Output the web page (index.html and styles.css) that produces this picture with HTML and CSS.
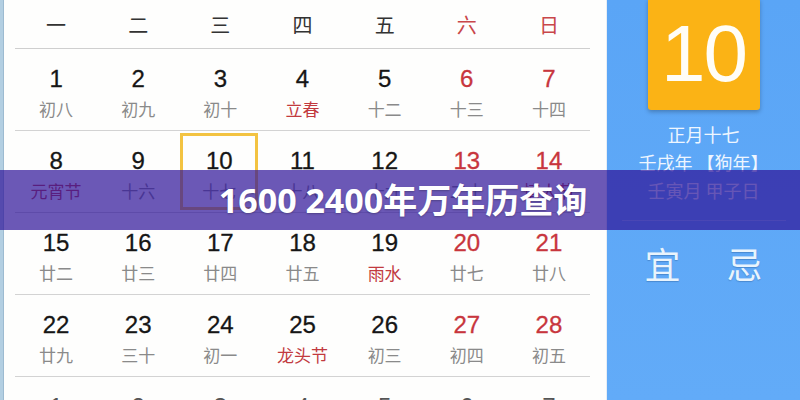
FILE: index.html
```html
<!DOCTYPE html>
<html lang="zh">
<head>
<meta charset="utf-8">
<title>1600 2400年万年历查询</title>
<link rel="stylesheet" href="styles.css">
</head>
<body>
<div class="page">
  <div class="edge"></div>
  <div class="cal">
    <div class="weekdays">
      <span>一</span><span>二</span><span>三</span><span>四</span><span>五</span><span class="we">六</span><span class="we">日</span>
    </div>
    <div class="row">
      <div class="cell"><b>1</b><i>初八</i></div>
      <div class="cell"><b>2</b><i>初九</i></div>
      <div class="cell"><b>3</b><i>初十</i></div>
      <div class="cell"><b>4</b><i class="fest">立春</i></div>
      <div class="cell"><b>5</b><i>十二</i></div>
      <div class="cell we"><b>6</b><i>十三</i></div>
      <div class="cell we"><b>7</b><i>十四</i></div>
    </div>
    <div class="row">
      <div class="cell"><b>8</b><i class="fest">元宵节</i></div>
      <div class="cell"><b>9</b><i>十六</i></div>
      <div class="cell today"><b>10</b><i>十七</i></div>
      <div class="cell"><b>11</b><i>十八</i></div>
      <div class="cell"><b>12</b><i>十九</i></div>
      <div class="cell we"><b>13</b><i>二十</i></div>
      <div class="cell we"><b>14</b><i class="fest">情人节</i></div>
    </div>
    <div class="row">
      <div class="cell"><b>15</b><i>廿二</i></div>
      <div class="cell"><b>16</b><i>廿三</i></div>
      <div class="cell"><b>17</b><i>廿四</i></div>
      <div class="cell"><b>18</b><i>廿五</i></div>
      <div class="cell"><b>19</b><i class="fest">雨水</i></div>
      <div class="cell we"><b>20</b><i>廿七</i></div>
      <div class="cell we"><b>21</b><i>廿八</i></div>
    </div>
    <div class="row">
      <div class="cell"><b>22</b><i>廿九</i></div>
      <div class="cell"><b>23</b><i>三十</i></div>
      <div class="cell"><b>24</b><i>初一</i></div>
      <div class="cell"><b>25</b><i class="fest">龙头节</i></div>
      <div class="cell"><b>26</b><i>初三</i></div>
      <div class="cell we"><b>27</b><i>初四</i></div>
      <div class="cell we"><b>28</b><i>初五</i></div>
    </div>
    <div class="row next">
      <div class="cell"><b>1</b><i>初六</i></div>
      <div class="cell"><b>2</b><i>初七</i></div>
      <div class="cell"><b>3</b><i>初八</i></div>
      <div class="cell"><b>4</b><i>初九</i></div>
      <div class="cell"><b>5</b><i>初十</i></div>
      <div class="cell"><b>6</b><i>十一</i></div>
      <div class="cell"><b>7</b><i>十二</i></div>
    </div>
  </div>
  <div class="panel">
    <div class="daybox">10</div>
    <div class="lunar">
      <p>正月十七</p>
      <p>壬戌年 【狗年】</p>
      <p>壬寅月 甲子日</p>
    </div>
    <div class="yiji"><span>宜</span><span>忌</span></div>
  </div>
  <div class="banner"><h1>1600 2400年万年历查询</h1></div>
</div>
</body>
</html>
```
FILE: styles.css
```css
* { box-sizing: border-box; }
html, body { margin: 0; padding: 0; }
body {
  width: 800px;
  height: 400px;
  overflow: hidden;
  background: #fdfdfc;
  font-family: "Liberation Sans", "Noto Sans CJK SC", sans-serif;
}
.page {
  position: relative;
  display: flex;
  width: 800px;
  height: 400px;
  overflow: hidden;
}
.edge {
  width: 4px;
  flex: none;
  background: #b3cfe2;
  border-right: 1px solid #9dbbd1;
}
.cal {
  width: 602px;
  flex: none;
  padding: 0 16px 0 11px;
  background: #fefefd;
}
.weekdays {
  display: grid;
  grid-template-columns: repeat(7, 1fr);
  height: 49px;
  border-bottom: 1px solid #cfcfcf;
  align-items: center;
  padding-bottom: 0;
}
.weekdays span {
  text-align: center;
  font-family: "Noto Sans CJK SC", sans-serif;
  font-size: 20px;
  color: #333;
  line-height: 1;
  padding-top: 2px;
}
.weekdays span.we { color: #c9474a; }
.row {
  display: grid;
  grid-template-columns: repeat(7, 1fr);
  height: 82px;
  border-bottom: 1px solid #d3d3d3;
}
.cell {
  display: flex;
  flex-direction: column;
  align-items: center;
  padding-top: 17px;
}
.cell b {
  font-weight: normal;
  font-size: 24px;
  line-height: 26px;
  color: #161616;
  -webkit-text-stroke: 0.3px #161616;
}
.cell i {
  font-style: normal;
  font-family: "Noto Sans CJK SC", sans-serif;
  font-size: 17px;
  line-height: 20px;
  margin-top: 7px;
  color: #8a8a8a;
}
.cell.we b { color: #c8363d; -webkit-text-stroke: 0.3px #c8363d; }
.cell i.fest { color: #c23a3f; }
.cell.today {
  margin: 2px 3px 2px 1px;
  padding-top: 15px;
  box-shadow: inset 0 0 0 3px #f3c341;
}
.row.next .cell b { color: #555; -webkit-text-stroke: 0; }
.panel {
  flex: 1;
  background: linear-gradient(#5aa5f6, #62abf8);
  display: flex;
  flex-direction: column;
  align-items: center;
  border-left: 1px solid #e8eef5;
}
.daybox {
  width: 112px;
  height: 112px;
  margin-top: -2px;
  background: #fbb315;
  border-radius: 3px;
  box-shadow: 0 2px 4px rgba(0, 0, 0, 0.25);
  color: #fffdf6;
  font-family: "Liberation Sans", sans-serif;
  font-size: 80px;
  line-height: 112px;
  text-align: center;
  letter-spacing: -2px;
}
.lunar {
  margin-top: 10px;
  width: 164px;
  padding-bottom: 16px;
  border-bottom: 1px solid rgba(255, 255, 255, 0.3);
  text-align: center;
}
.lunar p {
  margin: 0;
  font-family: "Noto Sans CJK SC", sans-serif;
  font-size: 18px;
  line-height: 28px;
  color: #eef6ff;
}
.yiji {
  display: flex;
  gap: 46px;
  margin-top: 22px;
}
.yiji span {
  font-family: "Noto Sans CJK SC", sans-serif;
  font-size: 36px;
  line-height: 40px;
  color: #e9f4fd;
  text-shadow: 0 1px 1px rgba(40, 90, 150, 0.4);
}
.banner {
  position: absolute;
  left: 0;
  top: 170px;
  width: 800px;
  height: 60px;
  background: rgba(46, 20, 152, 0.71);
  display: flex;
  align-items: center;
  justify-content: center;
}
.banner h1 {
  margin: 0;
  padding-left: 6px;
  font-family: "Open Sans", "Noto Sans CJK SC", sans-serif;
  font-weight: 700;
  font-size: 34px;
  line-height: 1;
  color: #fff;
  text-shadow: 0 1px 2px rgba(0, 0, 0, 0.25);
}
```
